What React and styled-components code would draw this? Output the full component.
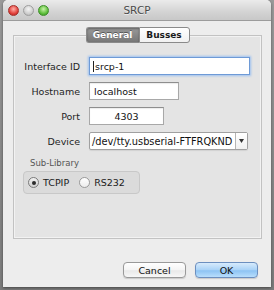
import React from "react";
import styled, { createGlobalStyle } from "styled-components";

const Global = createGlobalStyle`
  html, body { margin: 0; padding: 0; }
  body {
    background: #8c8c8c;
    font-family: "DejaVu Sans", "Liberation Sans", sans-serif;
    -webkit-font-smoothing: antialiased;
  }
  * { box-sizing: border-box; }
`;

const Desktop = styled.div`
  width: 274px;
  height: 290px;
  padding: 0 3px 0 3px;
  background: linear-gradient(#9a9a9a, #7c7c7c);
`;

const Window = styled.div`
  width: 268px;
  height: 287px;
  background: #ededed;
  border-radius: 5px 5px 0 0;
  display: flex;
  flex-direction: column;
  overflow: hidden;
  box-shadow: 0 1px 3px rgba(0,0,0,0.45);
`;

const TitleBar = styled.div`
  height: 21px;
  flex: none;
  display: grid;
  grid-template-columns: 1fr auto 1fr;
  align-items: center;
  background: linear-gradient(#ebebeb, #d3d3d3 60%, #c8c8c8);
  border-bottom: 1px solid #9c9c9c;
`;

const Lights = styled.div`
  display: flex;
  gap: 4px;
  padding-left: 5px;
`;

const Light = styled.span`
  width: 11px;
  height: 11px;
  border-radius: 50%;
  border: 1px solid ${p => p.$edge};
  background: radial-gradient(circle at 50% 35%, ${p => p.$hi} 0%, ${p => p.$c} 60%, ${p => p.$lo} 100%);
`;

const Title = styled.div`
  font-size: 10.5px;
  color: #4a4a4a;
  text-shadow: 0 1px 0 rgba(255,255,255,0.6);
`;

const Content = styled.div`
  flex: 1;
  display: flex;
  flex-direction: column;
  padding: 6px 9px 0 10px;
`;

const TabStrip = styled.div`
  display: flex;
  justify-content: center;
  margin-bottom: -8px;
  position: relative;
  z-index: 1;
`;

const Tab = styled.div`
  height: 16px;
  width: ${p => p.$w}px;
  display: flex;
  align-items: center;
  justify-content: center;
  font-size: 9px;
  font-weight: bold;
  border: 1px solid #8a8a8a;
  ${p => p.$first ? "border-radius: 3px 0 0 3px; border-right: none;" : "border-radius: 0 3px 3px 0;"}
  color: ${p => p.$active ? "#fff" : "#1a1a1a"};
  background: ${p => p.$active ? "linear-gradient(#9a9a9a, #777)" : "linear-gradient(#fff, #f1f1f1)"};
  text-shadow: ${p => p.$active ? "0 -1px 0 rgba(0,0,0,0.4)" : "none"};
  box-shadow: ${p => p.$active ? "inset 0 1px 2px rgba(0,0,0,0.35)" : "none"};
`;

const Panel = styled.div`
  height: 204px;
  border: 1px solid #c2c2c2;
  background: #e4e4e4;
  box-shadow: inset 0 0 0 1px #f2f2f2;
  padding-top: 21px;
  display: flex;
  flex-direction: column;
`;

const FormGrid = styled.div`
  display: grid;
  grid-template-columns: 66px auto;
  column-gap: 9px;
  row-gap: 7px;
  align-items: center;
  justify-items: start;
`;

const Label = styled.div`
  justify-self: end;
  font-size: 9.5px;
  color: #1f1f1f;
`;

const Field = styled.div`
  width: ${p => p.$w}px;
  height: 18px;
  background: #fff;
  border: 1px solid ${p => p.$focus ? "#6e9ad6" : "#a8a8a8"};
  border-top-color: ${p => p.$focus ? "#6e9ad6" : "#8e8e8e"};
  box-shadow: ${p => p.$focus ? "0 0 2px 1px #9dc1ef" : "inset 0 1px 1px rgba(0,0,0,0.08)"};
  display: flex;
  align-items: center;
  justify-content: ${p => p.$center ? "center" : "flex-start"};
  padding: 0 4px;
  font-size: 9.5px;
  color: #111;
  white-space: nowrap;
  overflow: hidden;
`;

const Caret = styled.span`
  width: 1px;
  height: 11px;
  background: #222;
  margin-right: 1px;
  margin-left: -1px;
`;

const Select = styled.div`
  width: ${p => p.$w}px;
  height: 18px;
  display: flex;
  background: #fff;
  border: 1px solid #a0a0a0;
  border-radius: 2px;
  box-shadow: 0 1px 1px rgba(0,0,0,0.08);
  font-size: 9.8px;
  color: #111;
`;

const SelectText = styled.div`
  flex: 1;
  overflow: hidden;
  white-space: nowrap;
  display: flex;
  align-items: center;
  padding-left: 2px;
`;

const SelectArrow = styled.div`
  width: 12px;
  flex: none;
  border-left: 1px solid #b5b5b5;
  display: flex;
  align-items: center;
  justify-content: center;
  background: linear-gradient(#fff, #f0f0f0);
`;

const SubSection = styled.div`
  margin: 8px 0 0 9px;
  display: flex;
  flex-direction: column;
`;

const SubLabel = styled.div`
  font-size: 8.5px;
  line-height: 11px;
  color: #555;
  padding-left: 7px;
  margin-bottom: 2px;
`;

const GroupBox = styled.div`
  width: 117px;
  height: 23px;
  border: 1px solid #c8c8c8;
  border-radius: 4px;
  background: #dbdbdb;
  display: flex;
  align-items: center;
  padding-left: 4px;
  gap: 10px;
`;

const Radio = styled.label`
  display: flex;
  align-items: center;
  gap: 4px;
  font-size: 9.5px;
  color: #1a1a1a;
`;

const RadioCircle = styled.span`
  width: 11px;
  height: 11px;
  border-radius: 50%;
  border: 1px solid ${p => p.$on ? "#7b7b7b" : "#9a9a9a"};
  background: ${p => p.$on ? "linear-gradient(#f2f2f2, #cfcfcf)" : "linear-gradient(#fff, #ececec)"};
  display: flex;
  align-items: center;
  justify-content: center;
  &::after {
    content: "";
    width: 4px;
    height: 4px;
    border-radius: 50%;
    background: #2b2b2b;
    display: ${p => p.$on ? "block" : "none"};
  }
`;

const Footer = styled.div`
  margin-top: 23px;
  display: flex;
  justify-content: flex-end;
  gap: 9px;
  padding-right: 4px;
`;

const Button = styled.div`
  width: 63px;
  height: 16px;
  border-radius: 4px;
  display: flex;
  align-items: center;
  justify-content: center;
  font-size: 9.5px;
  color: #111;
  border: 1px solid ${p => p.$primary ? "#6c8fbf" : "#999"};
  background: ${p => p.$primary
    ? "linear-gradient(#d7ebfc, #a9d2f7 50%, #8dc3f3 55%, #b8defc)"
    : "linear-gradient(#ffffff, #f4f4f4 50%, #e9e9e9 55%, #f7f7f7)"};
  box-shadow: 0 1px 1px rgba(0,0,0,0.15);
`;

export default function App() {
  return (
    <>
      <Global />
      <Desktop>
        <Window>
          <TitleBar>
            <Lights>
              <Light $c="#e2423d" $hi="#ffb0a8" $lo="#a81e1a" $edge="#a5302b" />
              <Light $c="#cfcfcf" $hi="#f5f5f5" $lo="#a9a9a9" $edge="#9e9e9e" />
              <Light $c="#5fbf3d" $hi="#c8f2a8" $lo="#2f8a1f" $edge="#3f8e2a" />
            </Lights>
            <Title>SRCP</Title>
            <div />
          </TitleBar>
          <Content>
            <TabStrip>
              <Tab $first $active $w={53}>General</Tab>
              <Tab $w={51}>Busses</Tab>
            </TabStrip>
            <Panel>
              <FormGrid>
                <Label>Interface ID</Label>
                <Field $w={161} $focus><Caret />srcp-1</Field>
                <Label>Hostname</Label>
                <Field $w={90}>localhost</Field>
                <Label>Port</Label>
                <Field $w={75} $center>4303</Field>
                <Label>Device</Label>
                <Select $w={159}>
                  <SelectText>/dev/tty.usbserial-FTFRQKND</SelectText>
                  <SelectArrow>
                    <svg width="5" height="4" viewBox="0 0 5 4">
                      <path d="M0 0 H5 L2.5 4 Z" fill="#333" />
                    </svg>
                  </SelectArrow>
                </Select>
              </FormGrid>
              <SubSection>
                <SubLabel>Sub-Library</SubLabel>
                <GroupBox>
                  <Radio><RadioCircle $on />TCPIP</Radio>
                  <Radio><RadioCircle />RS232</Radio>
                </GroupBox>
              </SubSection>
            </Panel>
            <Footer>
              <Button>Cancel</Button>
              <Button $primary>OK</Button>
            </Footer>
          </Content>
        </Window>
      </Desktop>
    </>
  );
}
